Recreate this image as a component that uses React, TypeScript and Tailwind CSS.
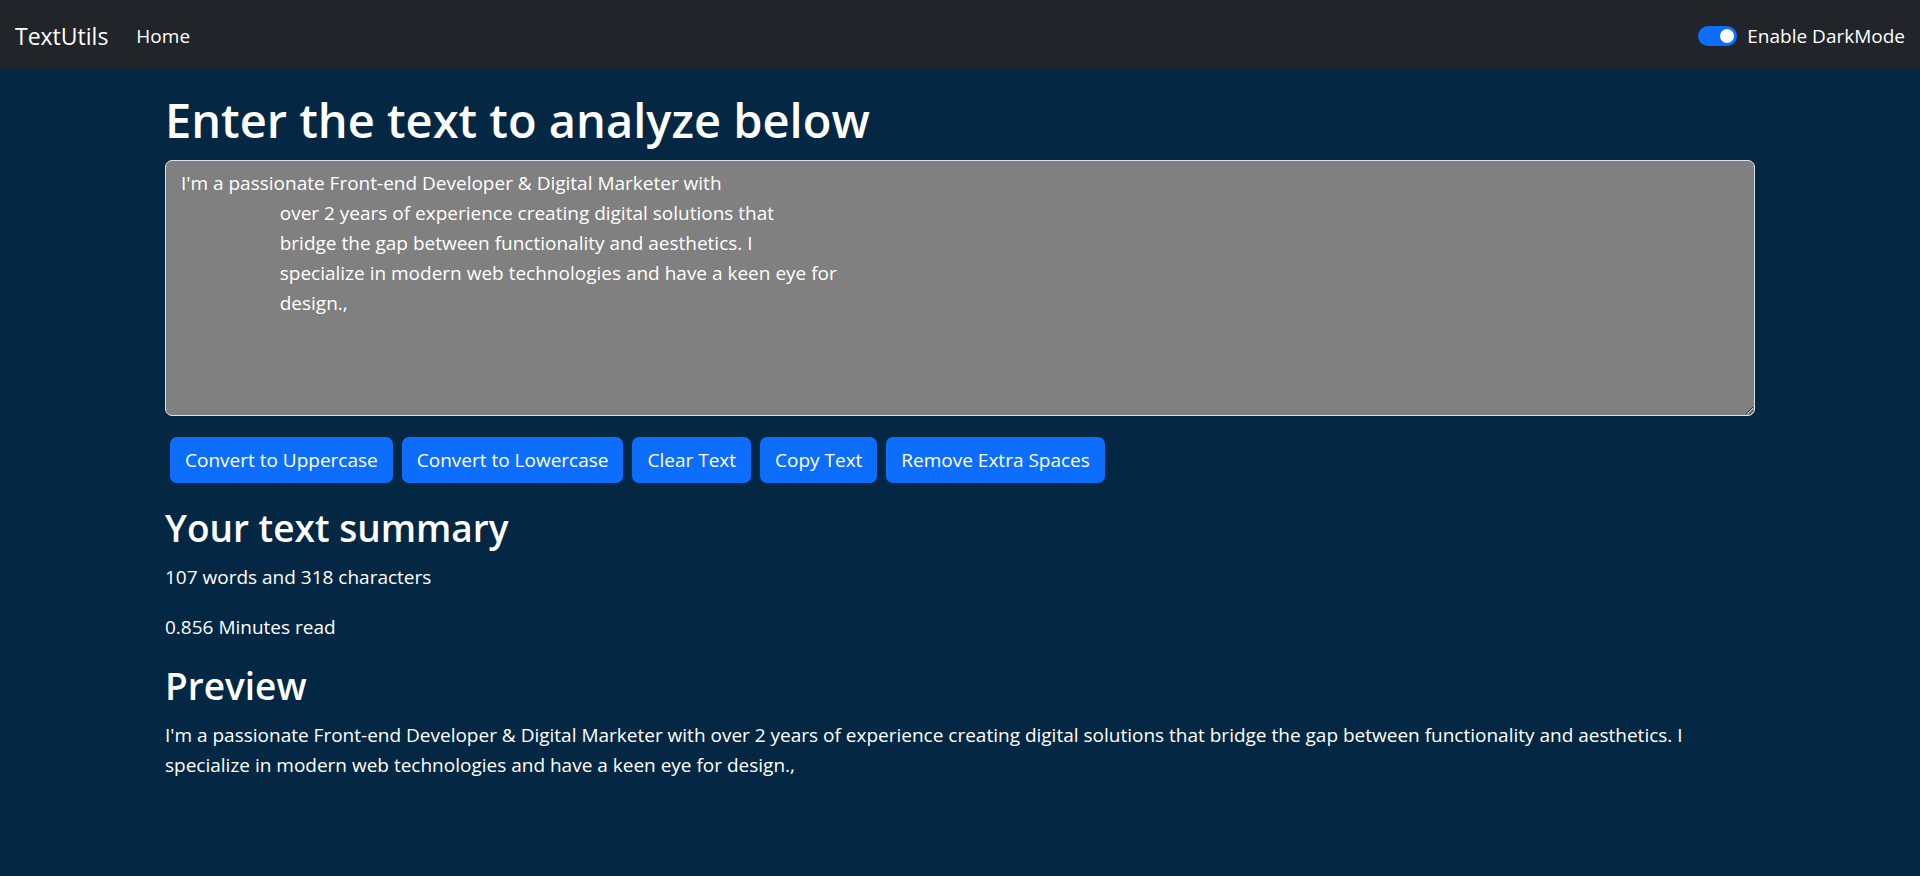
import { useState } from "react";

const indent = " ".repeat(20);
const initialText =
	"I'm a passionate Front-end Developer & Digital Marketer with\n" +
	indent + "over 2 years of experience creating digital solutions that\n" +
	indent + "bridge the gap between functionality and aesthetics. I\n" +
	indent + "specialize in modern web technologies and have a keen eye for\n" +
	indent + "design.,";

const buttons = ["Convert to Uppercase", "Convert to Lowercase", "Clear Text", "Copy Text", "Remove Extra Spaces"];

export default function App() {
	const [text, setText] = useState(initialText);

	return (
		<div className="min-h-screen bg-[#042743] text-white font-['Open_Sans',sans-serif]">
			{/* Navbar */}
			<nav className="h-[70px] bg-[#212529] flex items-center justify-between px-[15px]">
				<div className="flex items-center pt-[2px]">
					<a href="/" className="text-[23px] mr-[20px]">TextUtils</a>
					<a href="/" className="text-[19px] px-[8px]">Home</a>
				</div>
				<div className="flex items-center pt-[2px]">
					<div className="w-[39px] h-[20px] rounded-full bg-[#0d6efd] flex items-center justify-end pr-[3px]">
						<div className="w-[14px] h-[14px] rounded-full bg-white" />
					</div>
					<label className="ml-[10px] text-[19px]">Enable DarkMode</label>
				</div>
			</nav>

			<main className="w-[1590px] mx-auto pt-[20px]">
				<h1 className="text-[47px] leading-[60px] font-semibold mb-[10px]">Enter the text to analyze below</h1>
				<textarea
					value={text}
					onChange={(e) => setText(e.target.value)}
					className="block w-full h-[256px] bg-[#808080] border border-[#dee2e6] rounded-[7px] px-[15px] py-[7px] text-[19px] leading-[30px] text-white resize-y outline-none"
				/>

				{/* Buttons */}
				<div className="flex gap-[9px] pl-[5px] mt-[21px]">
					{buttons.map((b) => (
						<button key={b} className="h-[46px] px-[15px] rounded-[7px] bg-[#0d6efd] text-[19px]">{b}</button>
					))}
				</div>

				{/* Summary */}
				<div className="mt-[21px]">
					<h2 className="text-[37px] leading-[48px] font-semibold mb-[10px]">Your text summary</h2>
					<p className="text-[19px] leading-[30px] mb-[20px]">107 words and 318 characters</p>
					<p className="text-[19px] leading-[30px] mb-[20px]">0.856 Minutes read</p>
					<h2 className="text-[37px] leading-[48px] font-semibold mb-[10px]">Preview</h2>
					<p className="text-[19px] leading-[30px]">{text.replace(/\s+/g, " ")}</p>
				</div>
			</main>
		</div>
	);
}
